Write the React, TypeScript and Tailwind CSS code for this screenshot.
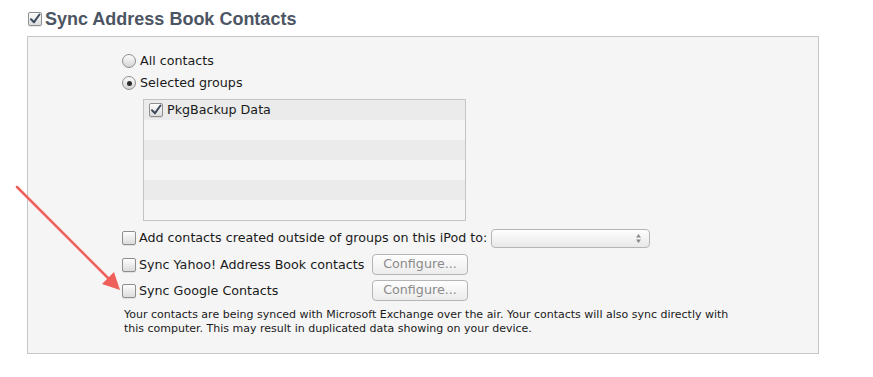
import React from 'react';

const body = { fontFamily: '"DejaVu Sans", "Lucida Grande", sans-serif' };

function Check({ checked = false }: { checked?: boolean }) {
  return (
    <span className="inline-flex w-[14px] h-[14px] shrink-0 items-center justify-center rounded-[2px] border border-[#8e8e8e] bg-gradient-to-b from-[#fdfdfd] to-[#dcdcdc] shadow-[0_1px_0_rgba(0,0,0,0.08)]">
      {checked && (
        <svg width="12" height="12" viewBox="0 0 12 12">
          <path d="M2 6.2 L5 9.2 L10.5 1.5" fill="none" stroke="#3d4a5c" strokeWidth="2" strokeLinecap="round" strokeLinejoin="round" />
        </svg>
      )}
    </span>
  );
}

function Radio({ on = false }: { on?: boolean }) {
  return (
    <span className="inline-flex w-[14px] h-[14px] shrink-0 items-center justify-center rounded-full border border-[#8e8e8e] bg-gradient-to-b from-[#fdfdfd] to-[#d4d4d4]">
      {on && <span className="w-[5px] h-[5px] rounded-full bg-[#2b2b2b]" />}
    </span>
  );
}

function ConfigureButton() {
  return (
    <button className="h-[21px] w-[96px] rounded-[4px] border border-[#b5b5b5] bg-gradient-to-b from-[#fefefe] to-[#ececec] text-[12.7px] text-[#8a8a8a] leading-none" style={body}>
      Configure...
    </button>
  );
}

export default function App() {
  const rows = [0, 1, 2, 3, 4, 5];
  return (
    <div className="relative w-[873px] h-[377px] bg-white overflow-hidden">
      <div className="pl-[28px] pt-[10px]">
        <div className="flex items-center gap-[3px] h-[18px]">
          <Check checked />
          <span className="text-[18px] font-bold text-[#4c5563] leading-none" style={{ fontFamily: '"Liberation Sans", Arial, sans-serif' }}>
            Sync Address Book Contacts
          </span>
        </div>
      </div>

      <div className="ml-[27px] mt-[8px] w-[792px] h-[318px] border border-[#c6c6c6] bg-[#f5f5f5] text-[12.7px] text-[#1a1a1a]" style={body}>
        <div className="pl-[94px] pt-[16px] flex flex-col">
          <div className="flex items-center gap-[4px] h-[16px]">
            <Radio />
            <span>All contacts</span>
          </div>
          <div className="flex items-center gap-[4px] h-[16px] mt-[6px]">
            <Radio on />
            <span>Selected groups</span>
          </div>
        </div>

        <div className="ml-[115px] mt-[8px] w-[323px] h-[122px] border border-[#c4c4c4] bg-[#f5f5f5]">
          {rows.map(i => (
            <div key={i} className={`h-[20px] flex items-center gap-[4px] pl-[5px] ${i % 2 === 0 ? 'bg-[#ebebeb]' : 'bg-[#f5f5f5]'}`}>
              {i === 0 && (
                <>
                  <Check checked />
                  <span>PkgBackup Data</span>
                </>
              )}
            </div>
          ))}
        </div>

        <div className="pl-[94px] mt-[7px] flex flex-col">
          <div className="flex items-center h-[20px]">
            <Check />
            <span className="ml-[3px]">Add contacts created outside of groups on this iPod to:</span>
            <div className="ml-[4px] w-[159px] h-[19px] rounded-[4px] border border-[#b5b5b5] bg-gradient-to-b from-[#fefefe] to-[#e8e8e8] flex items-center justify-end pr-[7px]">
              <svg width="7" height="11" viewBox="0 0 7 11">
                <path d="M3.5 1 L6 4.5 H1 Z M3.5 10 L6 6.5 H1 Z" fill="#8a8a8a" />
              </svg>
            </div>
          </div>
          <div className="flex items-center h-[21px] mt-[6px]">
            <Check />
            <span className="ml-[3px] w-[233px]">Sync Yahoo! Address Book contacts</span>
            <ConfigureButton />
          </div>
          <div className="flex items-center h-[21px] mt-[5px]">
            <Check />
            <span className="ml-[3px] w-[233px]">Sync Google Contacts</span>
            <ConfigureButton />
          </div>
        </div>

        <p className="ml-[96px] mt-[7px] w-[614px] text-[11px] leading-[14px] text-[#1a1a1a]">
          Your contacts are being synced with Microsoft Exchange over the air. Your contacts will also sync directly with this computer. This may result in duplicated data showing on your device.
        </p>
      </div>

      <svg className="absolute left-0 top-0 pointer-events-none" width="873" height="377">
        <line x1="17" y1="187" x2="110" y2="280" stroke="#f0605a" strokeWidth="2.5" strokeLinecap="round" />
        <path d="M120 290 L102 284 L114 272 Z" fill="#f0605a" />
      </svg>
    </div>
  );
}
